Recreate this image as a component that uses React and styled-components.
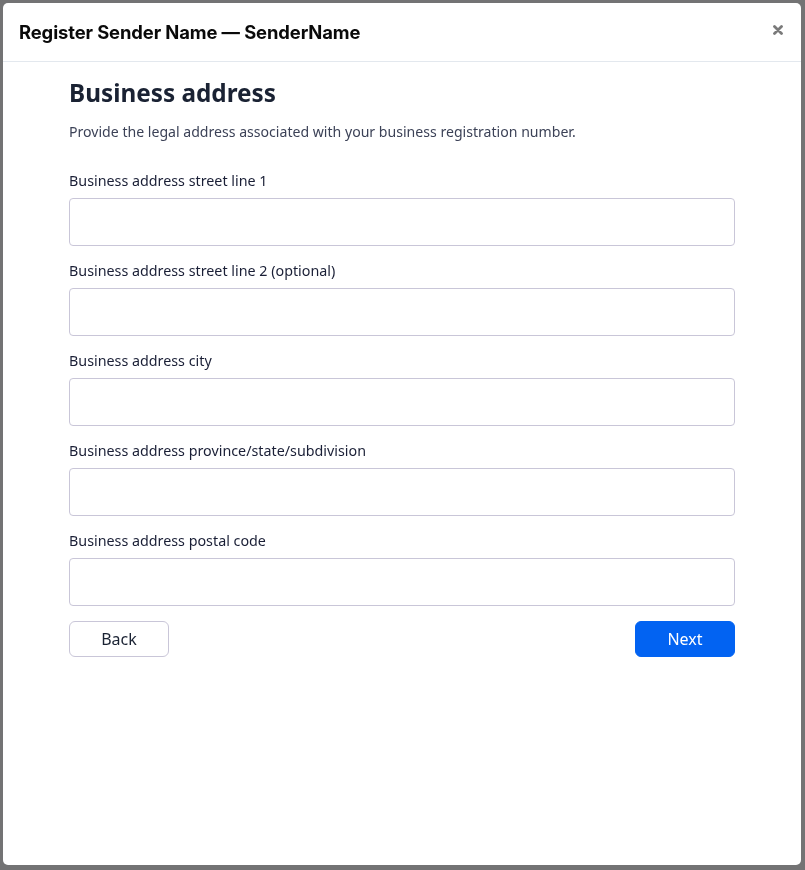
import React from 'react'
import styled, { createGlobalStyle } from 'styled-components'

const GlobalStyle = createGlobalStyle`
  html, body {
    margin: 0;
    padding: 0;
    height: 100%;
  }
  body {
    font-family: "Noto Sans", "Open Sans", sans-serif;
    background: #f4f5f7;
  }
`

const fields = [
  'Business address street line 1',
  'Business address street line 2 (optional)',
  'Business address city',
  'Business address province/state/subdivision',
  'Business address postal code',
]

const Overlay = styled.div`
  position: fixed;
  inset: 0;
  background: rgba(0, 0, 0, 0.53);
  display: flex;
  padding: 3px 4px 5px 3px;
  box-sizing: border-box;
`

const Modal = styled.div`
  flex: 1;
  background: #ffffff;
  border-radius: 5px;
  display: flex;
  flex-direction: column;
  overflow: hidden;
`

const Header = styled.div`
  height: 59px;
  box-sizing: border-box;
  border-bottom: 1px solid #e3e8ee;
  display: flex;
  align-items: center;
  justify-content: space-between;
  padding: 0 17px 0 16px;
`

const Title = styled.h1`
  margin: 0;
  font-family: Inter, "Liberation Sans", sans-serif;
  font-weight: 700;
  font-size: 18.4px;
  letter-spacing: -0.1px;
  color: #0a0a0a;
`

const Close = styled.button`
  border: none;
  background: none;
  padding: 0;
  width: 12px;
  height: 12px;
  display: flex;
  align-items: center;
  justify-content: center;
  cursor: pointer;
  margin-top: -5px;
`

const Body = styled.div`
  padding: 14px 66px 0 66px;
`

const Heading = styled.h2`
  margin: 0;
  font-family: "Noto Sans", sans-serif;
  font-weight: 700;
  font-size: 24.3px;
  line-height: 34px;
  color: #1a2233;
`

const Intro = styled.p`
  margin: 12px 0 29px 0;
  font-size: 14.1px;
  line-height: 20px;
  color: #3c4257;
`

const Field = styled.div`
  display: flex;
  flex-direction: column;
  margin-bottom: 15px;
`

const Label = styled.label`
  font-size: 14.3px;
  line-height: 20px;
  color: #1a1f36;
  margin-bottom: 7px;
`

const Input = styled.input`
  height: 48px;
  box-sizing: border-box;
  border: 1px solid #c9c6d8;
  border-radius: 4px;
  padding: 0 12px;
  font-size: 14px;
  outline: none;
`

const Actions = styled.div`
  display: flex;
  justify-content: space-between;
  margin-top: 2px;
`

const Button = styled.button`
  width: 100px;
  height: 36px;
  box-sizing: border-box;
  border-radius: 6px;
  font-family: "Noto Sans", sans-serif;
  font-size: 16px;
  cursor: pointer;
  border: 1px solid ${(p) => (p.primary ? '#0263f2' : '#c9c6d8')};
  background: ${(p) => (p.primary ? '#0263f2' : '#ffffff')};
  color: ${(p) => (p.primary ? '#ffffff' : '#1a2233')};
`

const App = () => {
  return (
    <>
      <GlobalStyle />
      <Overlay>
        <Modal>
          <Header>
            <Title>Register Sender Name — SenderName</Title>
            <Close aria-label="Close">
              <svg width="10" height="10" viewBox="0 0 10 10">
                <path d="M1.5 1.5 L8.5 8.5 M8.5 1.5 L1.5 8.5" stroke="#7a7a7a" strokeWidth="2.8" strokeLinecap="round" />
              </svg>
            </Close>
          </Header>
          <Body>
            <Heading>Business address</Heading>
            <Intro>Provide the legal address associated with your business registration number.</Intro>
            {fields.map((f) => (
              <Field key={f}>
                <Label>{f}</Label>
                <Input type="text" />
              </Field>
            ))}
            <Actions>
              <Button>Back</Button>
              <Button primary>Next</Button>
            </Actions>
          </Body>
        </Modal>
      </Overlay>
    </>
  )
}

export default App
